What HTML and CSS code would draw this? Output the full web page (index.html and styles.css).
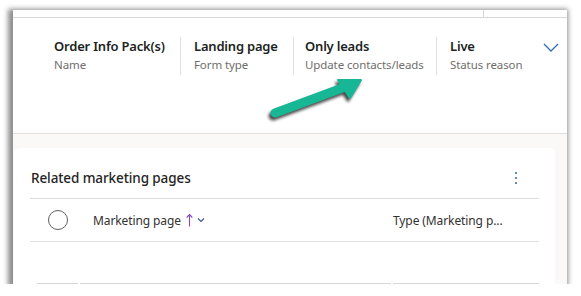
FILE: index.html
```html
<!DOCTYPE html>
<html>
<head>
<meta charset="utf-8">
<link rel="stylesheet" href="styles.css">
</head>
<body>
<div class="frame">
  <div class="topbar"><div class="topbar-split"></div></div>
  <div class="header">
    <div class="fields">
      <div class="field f1"><div class="ftitle">Order Info Pack(s)</div><div class="flabel">Name</div></div>
      <div class="field f2"><div class="ftitle">Landing page</div><div class="flabel">Form type</div></div>
      <div class="field f3"><div class="ftitle">Only leads</div><div class="flabel">Update contacts/leads</div></div>
      <div class="field f4"><div class="ftitle">Live</div><div class="flabel">Status reason</div></div>
    </div>
    <svg class="chev" width="16" height="10" viewBox="0 0 16 10"><polyline points="1,1 8,8 15,1" fill="none" stroke="#2f6db5" stroke-width="1.3"/></svg>
  </div>
  <div class="body">
    <div class="card">
      <div class="card-head">
        <div class="card-title">Related marketing pages</div>
        <svg class="more" width="4" height="14" viewBox="0 0 4 14"><circle cx="2" cy="2" r="1.1" fill="#3b6ea8"/><circle cx="2" cy="7" r="1.1" fill="#3b6ea8"/><circle cx="2" cy="12" r="1.1" fill="#3b6ea8"/></svg>
      </div>
      <div class="grid-head">
        <div class="check"></div>
        <div class="col col1">Marketing page
          <svg class="sort" width="7" height="14" viewBox="0 0 7 14"><line x1="3.5" y1="1.5" x2="3.5" y2="13.5" stroke="#8748b8" stroke-width="1.1"/><polyline points="0.7,4.5 3.5,1.5 6.3,4.5" fill="none" stroke="#8748b8" stroke-width="1.1"/></svg>
          <svg class="caret" width="8" height="6" viewBox="0 0 8 6"><polyline points="1,1.5 4,4.5 7,1.5" fill="none" stroke="#3b5b8a" stroke-width="1.2"/></svg>
        </div>
        <div class="col col2">Type (Marketing p...</div>
      </div>
      <div class="grid-foot"><div class="seg s1"></div><div class="seg s2"></div><div class="seg s3"></div></div>
    </div>
  </div>
  <svg class="arrow" width="581" height="296" viewBox="0 0 581 296">
    <line x1="275" y1="113" x2="345" y2="87" stroke="#17b796" stroke-width="9" stroke-linecap="round"/>
    <polygon points="361,80 338,80 350,98" fill="#17b796" stroke="#17b796" stroke-width="2" stroke-linejoin="round"/>
  </svg>
</div>
</body>
</html>
```
FILE: styles.css
```css
html, body { margin: 0; padding: 0; background: #ffffff; }
body { font-family: "Noto Sans", "Open Sans", sans-serif; color: #201f1e; }
.frame {
  margin: 10px 0 0 13px;
  width: 554px;
  height: 274px;
  background: #faf9f8;
  box-shadow: -2px 2px 5px 3px rgba(0,0,0,0.45);
  overflow: hidden;
  display: flex;
  flex-direction: column;
}
.topbar { height: 7px; flex: none; background: #fff; border-bottom: 1px solid #d6d6d6; display: flex; }
.topbar-split { margin-left: 470px; border-left: 1px solid #d6d6d6; }
.header {
  height: 116px;
  flex: none;
  background: #fff;
  border-bottom: 1px solid #e1dfdd;
  display: flex;
  align-items: flex-start;
  box-sizing: border-box;
  padding: 19px 10px 0 41px;
}
.fields { display: flex; }
.field { height: 38px; box-sizing: border-box; padding-top: 1px; }
.field + .field { border-left: 1px solid #e1dfdd; padding-left: 13px; }
.f1 { width: 126px; }
.f2 { width: 113px; }
.f3 { width: 143px; padding-left: 11px !important; }
.f4 { width: 80px; }
.ftitle { font-size: 13px; font-weight: 600; line-height: 17px; color: #201f1e; white-space: nowrap; letter-spacing: -0.2px; }
.flabel { font-size: 11.5px; line-height: 16px; color: #706e6b; white-space: nowrap; margin-top: 2px; letter-spacing: -0.1px; }
.chev { margin-left: auto; margin-top: 6px; margin-right: -2px; }
.body { flex: 1; padding: 14px 12px 0 1px; }
.card { background: #fff; border-radius: 6px 6px 0 0; height: 100%; padding: 0 16px; box-sizing: border-box; }
.card-head { height: 51px; box-sizing: border-box; display: flex; align-items: center; border-bottom: 1px solid #dcdcdc; padding: 20px 0 10px 1px; }
.card-title { font-size: 13.5px; font-weight: 500; line-height: 20px; color: #252423; letter-spacing: -0.1px; }
.more { margin-left: auto; margin-right: 21px; }
.grid-head { height: 43px; box-sizing: border-box; display: flex; align-items: center; border-bottom: 1px solid #e1dfdd; }
.check { width: 18px; height: 18px; border: 1px solid #605e5c; border-radius: 50%; margin-left: 18px; flex: none; }
.col { font-size: 12px; color: #323130; white-space: nowrap; display: flex; align-items: center; letter-spacing: -0.1px; }
.col1 { margin-left: 25px; width: 300px; }
.sort { margin: 0 4px 0 5px; }
.col2 { margin-left: 0; }
.grid-foot { display: flex; margin-top: 41px; gap: 2px; }
.seg { height: 1px; background: #d6d6d6; }
.s1 { width: 42px; margin-left: 7px; }
.s2 { width: 320px; }
.s3 { width: 150px; }
.arrow { position: absolute; left: 0; top: 0; pointer-events: none; filter: drop-shadow(-2px 3px 1.5px rgba(0,0,0,0.7)); }
```
